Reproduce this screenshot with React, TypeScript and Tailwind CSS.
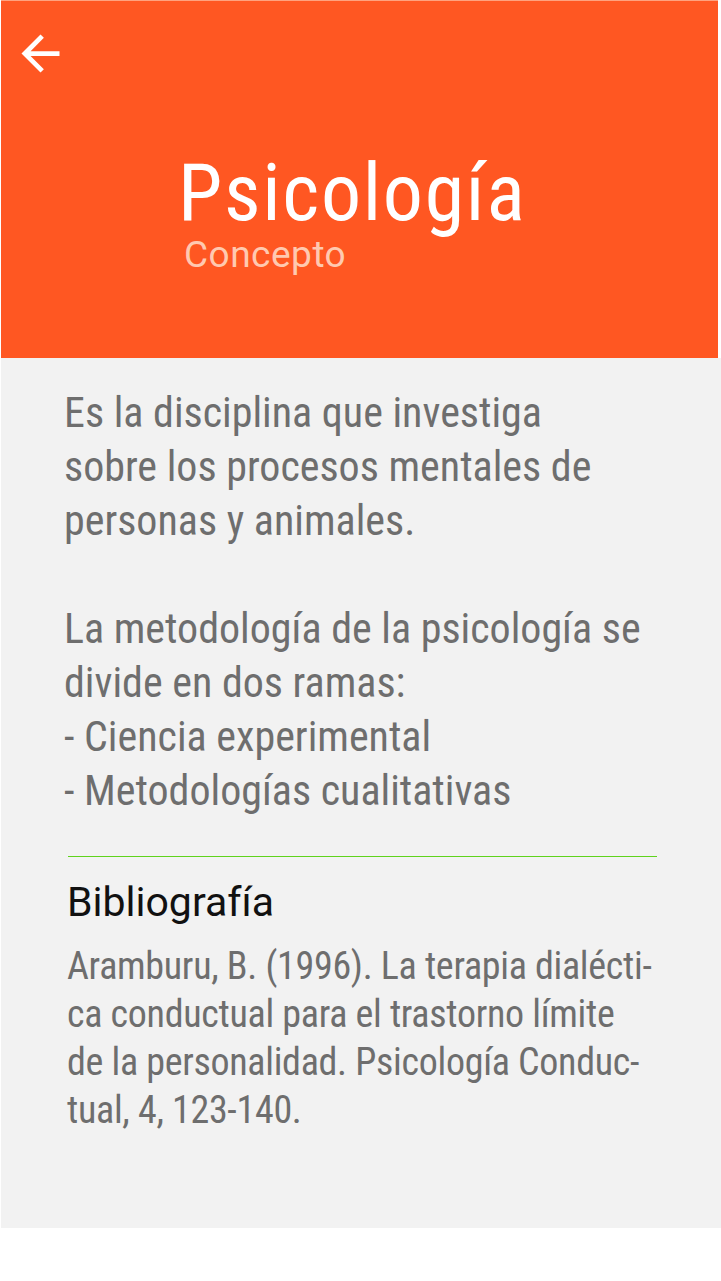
import React from 'react';

const font = { fontFamily: 'Roboto, "Open Sans", sans-serif' };

const BackArrow = () => (
  <svg width="57" height="57" viewBox="0 0 24 24" fill="#ffffff">
    <path d="M20 11H7.83l5.59-5.59L12 4l-8 8 8 8 1.41-1.41L7.83 13H20v-2z" />
  </svg>
);

export default function App() {
  return (
    <div className="w-[721px] h-[1281px] bg-white pl-[1px]" style={font}>
      {/* Header */}
      <div className="w-[717px] h-[358px] bg-[#ff5722] border-t border-[#ffa27f] flex flex-col">
        <div className="pl-[11px] pt-[24px]">
          <BackArrow />
        </div>
        <div className="pl-[177px] mt-[71px] flex flex-col">
          <h1 className="text-white text-[80px] leading-[80px] font-normal font-stretch-[86%] tracking-[1.7px]">Psicología</h1>
          <span className="pl-[6px] text-[#ffc9b0] text-[37px] leading-[44px] font-stretch-[94%] tracking-[0.5px]">Concepto</span>
        </div>
      </div>

      {/* Body */}
      <div className="w-[720px] h-[870px] bg-[#f2f2f2] flex flex-col">
        <div className="pt-[28px] pl-[63px] text-[42px] leading-[54px] text-[#6e6e6e] font-stretch-[86%]">
          <p>Es la disciplina que investiga</p>
          <p>sobre los procesos mentales de</p>
          <p>personas y animales.</p>
          <p>&nbsp;</p>
          <p>La metodología de la psicología se</p>
          <p>divide en dos ramas:</p>
          <p>- Ciencia experimental</p>
          <p>- Metodologías cualitativas</p>
        </div>

        <div className="ml-[67px] mt-[38px] w-[589px] h-px bg-[#5fd31d]" />

        <div className="pl-[66px] mt-[21px] flex flex-col">
          <h2 className="text-[41px] leading-[48px] text-[#111111] font-stretch-[91%]">Bibliografía</h2>
          <div className="mt-[16px] text-[38px] leading-[48px] text-[#6e6e6e] font-stretch-[86%] tracking-[-0.3px]">
            <p>Aramburu, B. (1996). La terapia dialécti-</p>
            <p>ca conductual para el trastorno límite</p>
            <p>de la personalidad. Psicología Conduc-</p>
            <p>tual, 4, 123-140.</p>
          </div>
        </div>
      </div>
    </div>
  );
}
